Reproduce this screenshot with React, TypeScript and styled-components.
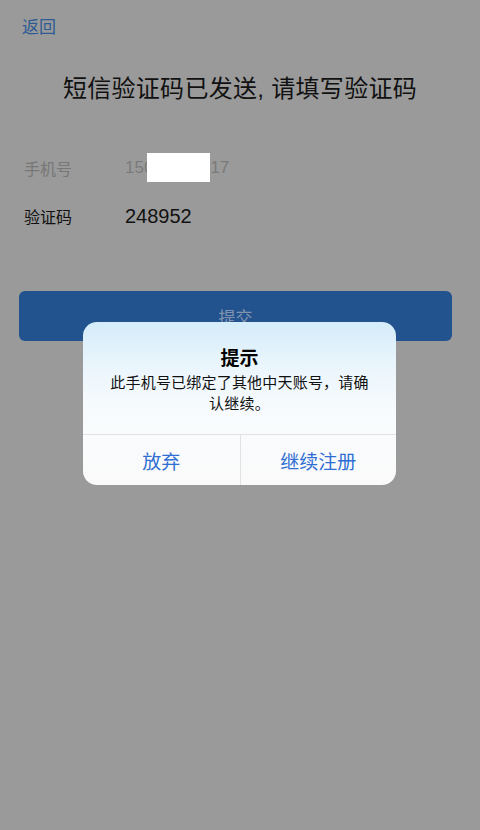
import React from "react";
import styled, { createGlobalStyle } from "styled-components";

const Global = createGlobalStyle`
  html, body { margin: 0; padding: 0; }
  body {
    background: #9a9a9a;
    font-family: "Liberation Sans", "Noto Sans CJK SC", sans-serif;
  }
`;

const Page = styled.div`
  position: relative;
  width: 480px;
  height: 830px;
  background: #9a9a9a;
  overflow: hidden;
`;

const Header = styled.div`
  height: 52px;
  padding: 0 22px;
  display: flex;
  align-items: center;
`;

const BackLink = styled.span`
  font-size: 17px;
  color: #2e5b94;
  margin-top: -1px;
`;

const Title = styled.h1`
  margin: 21px 0 0;
  text-align: center;
  font-size: 24px;
  letter-spacing: 0.3px;
  font-weight: 400;
  color: #111;
  line-height: 32px;
`;

const Form = styled.div`
  margin-top: 48px;
  padding: 0 24px;
  display: flex;
  flex-direction: column;
  gap: 18px;
`;

const Row = styled.div`
  display: flex;
  align-items: center;
  height: 30px;
`;

const Label = styled.span<{ $muted?: boolean }>`
  width: 101px;
  font-size: 16px;
  color: ${(p) => (p.$muted ? "#777" : "#111")};
`;

const Value = styled.span<{ $muted?: boolean }>`
  display: flex;
  align-items: center;
  font-size: ${(p) => (p.$muted ? "17px" : "20px")};
  color: ${(p) => (p.$muted ? "#7a7a7a" : "#111")};
`;

const Redact = styled.span`
  display: inline-block;
  width: 63px;
  height: 29px;
  background: #fff;
  margin: 0 0 0 -6px;
  position: relative;
  top: -1px;
`;

const SubmitButton = styled.button`
  display: block;
  margin: 60px 28px 0 19px;
  width: 433px;
  height: 50px;
  border: none;
  border-radius: 6px;
  background: #22538f;
  color: #8294ad;
  font-size: 17px;
  font-family: inherit;
`;

const Dialog = styled.div`
  position: absolute;
  left: 83px;
  top: 322px;
  width: 313px;
  border-radius: 14px;
  overflow: hidden;
  background: linear-gradient(180deg, #d4ecfa 0%, #e9f5fc 25%, #f8fbfd 55%, #fafafa 100%);
`;

const DialogBody = styled.div`
  padding: 24px 22px 20px;
  text-align: center;
`;

const DialogTitle = styled.div`
  font-size: 19px;
  font-weight: 700;
  color: #000;
  line-height: 26px;
`;

const DialogMessage = styled.div`
  font-size: 15px;
  letter-spacing: 0.2px;
  line-height: 21px;
  color: #111;
`;

const Actions = styled.div`
  display: grid;
  grid-template-columns: 1fr 1fr;
  border-top: 1px solid #e2e2e2;
  height: 50px;
`;

const Action = styled.div<{ $divider?: boolean }>`
  display: flex;
  align-items: center;
  justify-content: center;
  font-size: 19px;
  color: #2f6fd3;
  border-left: ${(p) => (p.$divider ? "1px solid #e2e2e2" : "none")};
`;

export default function App() {
  return (
    <>
      <Global />
      <Page>
        <Header>
          <BackLink>返回</BackLink>
        </Header>
        <Title>短信验证码已发送, 请填写验证码</Title>
        <Form>
          <Row>
            <Label $muted>手机号</Label>
            <Value $muted>
              150
              <Redact />
              17
            </Value>
          </Row>
          <Row>
            <Label>验证码</Label>
            <Value>248952</Value>
          </Row>
        </Form>
        <SubmitButton>提交</SubmitButton>
        <Dialog>
          <DialogBody>
            <DialogTitle>提示</DialogTitle>
            <DialogMessage>此手机号已绑定了其他中天账号，请确认继续。</DialogMessage>
          </DialogBody>
          <Actions>
            <Action>放弃</Action>
            <Action $divider>继续注册</Action>
          </Actions>
        </Dialog>
      </Page>
    </>
  );
}
